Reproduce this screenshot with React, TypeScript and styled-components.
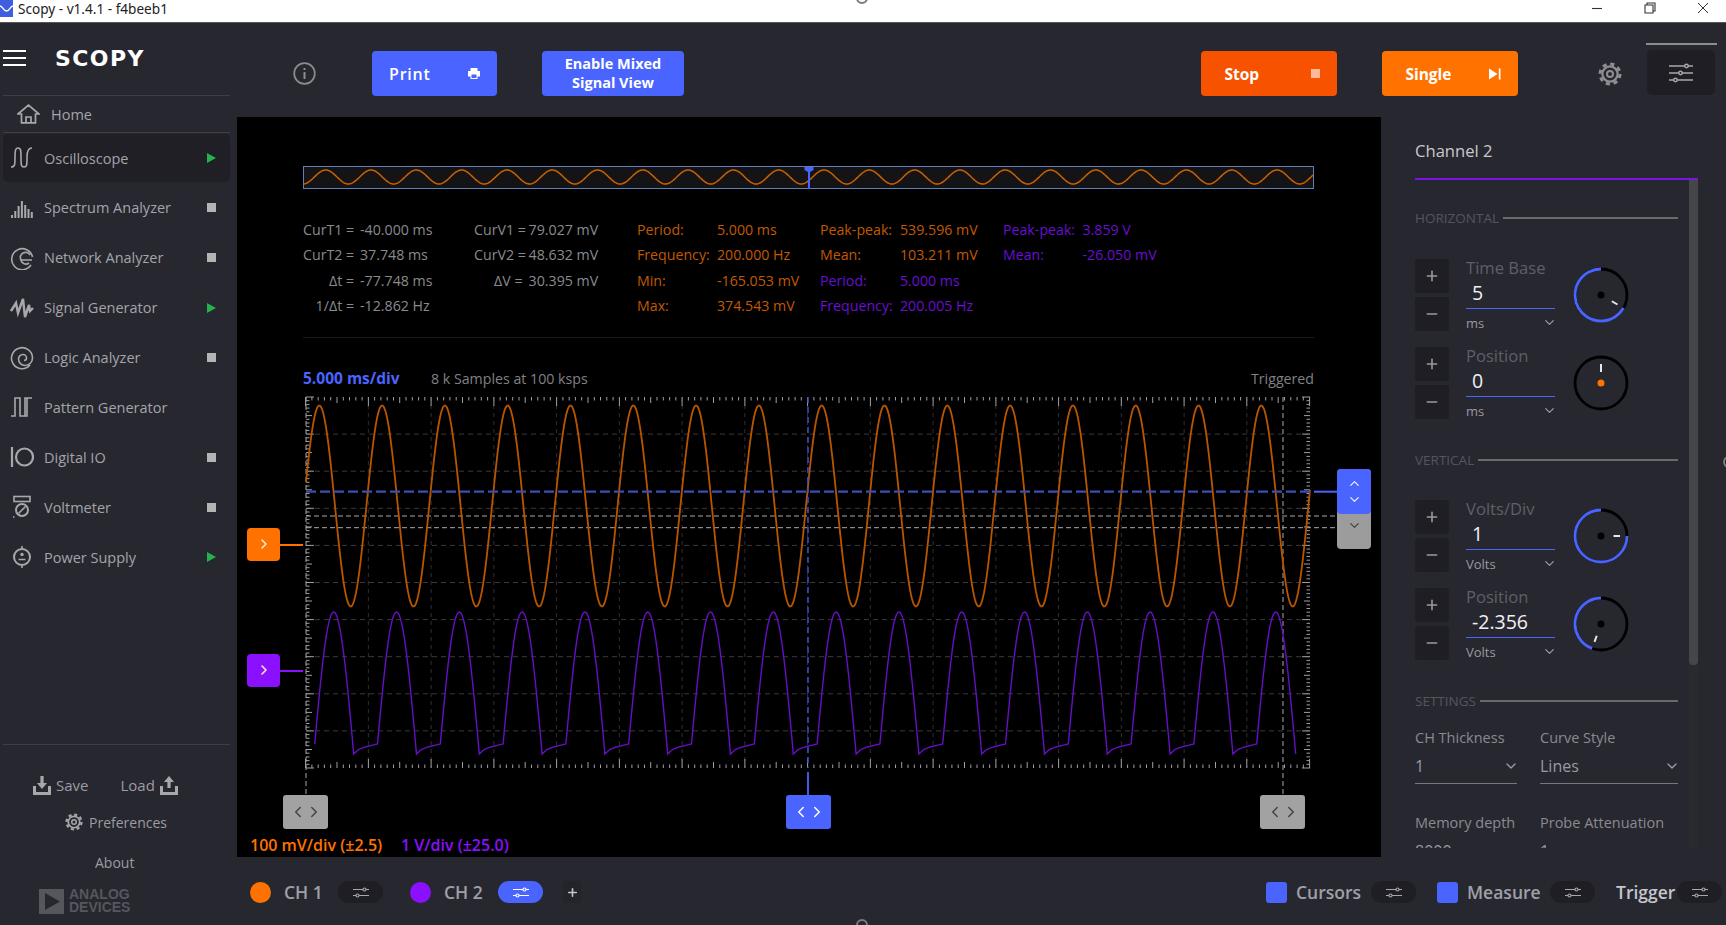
import React from "react";
import styled, { createGlobalStyle } from "styled-components";
import { ChevronDown, ChevronLeft, ChevronRight, ChevronUp, Minus, Plus } from "lucide-react";

const BLUE = "#4a64ff";
const ORANGE = "#ff7200";
const PURPLE = "#8a10ff";
const PANEL = "#272730";
const DARK = "#1e1e24";

const GlobalStyle = createGlobalStyle`
  html, body { margin: 0; padding: 0; background: ${PANEL}; }
  * { box-sizing: border-box; }
  body { font-family: "Open Sans", "Noto Sans", sans-serif; }
`;

const Root = styled.div`
  position: relative;
  width: 1726px;
  height: 925px;
  overflow: hidden;
  display: flex;
  flex-direction: column;
  background: ${PANEL};
`;

const ScreenMark = styled.div<{ $x: number; $y: number }>`
  position: absolute;
  left: ${(p) => p.$x}px;
  top: ${(p) => p.$y}px;
  width: 12px;
  height: 12px;
  border: 2px solid #7c7c7c;
  border-radius: 50%;
`;

/* window chrome */
const TitleBar = styled.header`
  height: 23px;
  flex: none;
  display: flex;
  align-items: flex-start;
  background: #fff;
  border-bottom: 1px solid #55555a;
`;
const AppGlyph = styled.svg`
  width: 13px;
  height: 17px;
  flex: none;
  margin-right: 5px;
`;
const TitleText = styled.span`
  font-family: "Noto Sans", sans-serif;
  font-size: 13.6px;
  line-height: 18px;
  color: #222;
`;
const WindowButtons = styled.div`
  margin-left: auto;
  display: flex;
  gap: 41px;
  padding: 2px 17px 0 0;
`;

/* left rail */
const Columns = styled.div`
  flex: 1;
  min-height: 0;
  display: flex;
`;
const Sidebar = styled.aside`
  width: 237px;
  flex: none;
  display: flex;
  flex-direction: column;
  background: ${PANEL};
`;
const Brand = styled.div`
  height: 73px;
  flex: none;
  margin: 0 7px 0 3px;
  display: flex;
  align-items: center;
  border-bottom: 1px solid #3e3e46;
  padding-bottom: 1px;
`;
const Hamburger = styled.div`
  width: 23px;
  height: 16px;
  border-top: 2px solid #fff;
  border-bottom: 2px solid #fff;
  position: relative;
  margin-top: -1px;
  &::after {
    content: "";
    position: absolute;
    left: 0;
    right: 0;
    top: 5px;
    height: 2px;
    background: #fff;
  }
`;
const Logo = styled.span`
  margin-left: 29px;
  font-family: "DejaVu Sans", sans-serif;
  font-size: 22px;
  font-weight: 700;
  letter-spacing: 1.4px;
  line-height: 24px;
  color: #fff;
`;
const HomeRow = styled.div`
  height: 37px;
  flex: none;
  margin: 0 7px 0 3px;
  padding-left: 14px;
  display: flex;
  align-items: center;
  gap: 11px;
  border-bottom: 1px solid #3e3e46;
  font-size: 14.5px;
  color: #a4a4a9;
`;
const NavList = styled.nav`
  display: flex;
  flex-direction: column;
  gap: 1.9px;
  padding: 1px 7px 0 3px;
`;
const NavItem = styled.div<{ $active?: boolean }>`
  height: 48px;
  display: flex;
  align-items: center;
  padding-left: 7px;
  border-radius: 5px;
  background: ${(p) => (p.$active ? "#1f1f25" : "transparent")};
  font-size: 14.5px;
  color: #a4a4a9;
`;
const NavIcon = styled.span`
  width: 24px;
  height: 24px;
  margin-right: 10px;
  flex: none;
  display: flex;
  align-items: center;
  justify-content: center;
`;
const StopMark = styled.span`
  margin-left: auto;
  margin-right: 14px;
  width: 9px;
  height: 9px;
  background: #b4b4b4;
`;
const RunMark = styled.span`
  margin-left: auto;
  margin-right: 14px;
  width: 0;
  height: 0;
  border-left: 9px solid #25b14c;
  border-top: 5.5px solid transparent;
  border-bottom: 5.5px solid transparent;
`;
const SideFooter = styled.div`
  margin-top: auto;
  height: 181px;
  flex: none;
  margin-left: 3px;
  margin-right: 7px;
  border-top: 1px solid #3e3e46;
  display: flex;
  flex-direction: column;
  font-size: 14px;
  color: #9c9ca2;
`;
const SaveRow = styled.div`
  display: flex;
  align-items: center;
  height: 20px;
  margin-top: 30px;
  padding-left: 30px;
  font-size: 15px;
`;
const SaveLabel = styled.span<{ $gap: number }>`
  margin: 0 ${(p) => p.$gap}px;
`;
const TraySvg = styled.svg<{ $ml?: number }>`
  flex: none;
  margin-left: ${(p) => p.$ml ?? 0}px;
`;
const PrefRow = styled.div`
  height: 20px;
  margin-top: 17px;
  display: flex;
  align-items: center;
  padding-left: 62px;
  gap: 6px;
`;
const AboutRow = styled.div`
  height: 20px;
  margin-top: 21px;
  padding-left: 92px;
  line-height: 20px;
`;
const AdiLogo = styled.div`
  margin-top: 15px;
  padding-left: 36px;
  display: flex;
  gap: 5px;
  align-items: center;
`;
const AdiText = styled.div`
  font-family: "Liberation Sans", sans-serif;
  font-weight: 700;
  font-size: 14px;
  line-height: 13px;
  color: #56565d;
`;

/* main column */
const Main = styled.main`
  flex: 1;
  min-width: 0;
  display: flex;
  flex-direction: column;
`;
const Toolbar = styled.div`
  height: 94px;
  flex: none;
  display: flex;
  align-items: center;
  padding: 7px 9px 0 56px;
`;
const InfoIcon = styled.svg`
  flex: none;
`;
const ToolButton = styled.button<{ $bg: string; $w: number; $ml: number; $pl: number }>`
  width: ${(p) => p.$w}px;
  height: 45px;
  margin-left: ${(p) => p.$ml}px;
  flex: none;
  border: 0;
  border-radius: 4px;
  background: ${(p) => p.$bg};
  color: #fff;
  font-family: inherit;
  font-weight: 700;
  font-size: 15.5px;
  display: flex;
  align-items: center;
  justify-content: space-between;
  padding: 0 17px 0 ${(p) => p.$pl}px;
`;
const PrintLabel = styled.span`
  font-weight: 600;
  font-size: 16px;
  letter-spacing: 0.8px;
`;
const MixedButton = styled.button`
  width: 142px;
  height: 45px;
  margin-left: 45px;
  flex: none;
  border: 0;
  border-radius: 4px;
  background: ${BLUE};
  color: #fff;
  font-family: inherit;
  font-weight: 700;
  font-size: 14.5px;
  line-height: 19px;
  text-align: center;
  padding: 0 0 1px;
`;
const Spacer = styled.div`
  flex: 1;
`;
const GearSlot = styled.span`
  margin-left: 79.6px;
  display: flex;
`;
const SettingsWrap = styled.div`
  width: 71px;
  margin-left: 24px;
  margin-top: -9px;
  border-top: 2px solid #8d8d8d;
  padding: 5px 2px 0 1px;
`;
const SettingsButton = styled.div`
  height: 45px;
  border-radius: 5px;
  background: ${DARK};
  display: flex;
  align-items: center;
  justify-content: center;
`;
const Workspace = styled.div`
  flex: 1;
  min-height: 0;
  display: flex;
`;

/* plot */
const PlotArea = styled.section`
  width: 1144px;
  flex: none;
  background: #000;
  display: flex;
  flex-direction: column;
  padding-top: 49px;
`;
const Overview = styled.svg`
  display: block;
  width: 1011px;
  height: 23px;
  margin-left: 66px;
  flex: none;
`;
const Readouts = styled.div`
  margin: 29px 0 0 66px;
  display: grid;
  grid-template-columns: 57px 114px 54.6px 108.4px 80px 103px 80px 103px 79.5px 1fr;
  grid-auto-rows: 25.4px;
  font-size: 14.2px;
  line-height: 24px;
  white-space: nowrap;
`;
const TONE: Record<string, string> = { grey: "#8a8a8e", orange: "#c25a00", purple: "#6a0fd4" };
const Cell = styled.div<{ $tone: string; $end?: boolean }>`
  color: ${(p) => TONE[p.$tone]};
  ${(p) => (p.$end ? "text-align: right; padding-right: 6px;" : "")}
`;
const Rule = styled.div`
  width: 1011px;
  height: 1px;
  flex: none;
  margin: 17px 0 0 66px;
  background: #1b1b1b;
`;
const PlotHead = styled.div`
  width: 1011px;
  height: 19px;
  flex: none;
  margin: 32px 0 0 66px;
  display: flex;
  font-size: 14.2px;
  line-height: 17px;
  color: #808085;
`;
const Timebase = styled.span`
  width: 128px;
  font-size: 15.5px;
  font-weight: 700;
  color: ${BLUE};
`;
const Triggered = styled.span`
  margin-left: auto;
`;
const PlotFrame = styled.div`
  position: relative;
  height: 445px;
  flex: none;
`;
const PlotSvg = styled.svg`
  display: block;
  width: 1144px;
  height: 445px;
`;
const CursorHandle = styled.div<{ $left: number; $active?: boolean }>`
  position: absolute;
  left: ${(p) => p.$left}px;
  top: 406px;
  width: 45px;
  height: 34px;
  border-radius: 3px;
  background: ${(p) => (p.$active ? BLUE : "#a2a2a2")};
  color: ${(p) => (p.$active ? "#fff" : "#444")};
  display: flex;
  align-items: center;
  justify-content: center;
  svg + svg {
    margin-left: -2px;
  }
`;
const ChannelTag = styled.div<{ $top: number; $color: string }>`
  position: absolute;
  left: 10px;
  top: ${(p) => p.$top}px;
  width: 33px;
  height: 33px;
  border-radius: 4px;
  background: ${(p) => p.$color};
  color: #ffe9d8;
  display: flex;
  align-items: center;
  justify-content: center;
  &::after {
    content: "";
    position: absolute;
    left: 33px;
    top: 16px;
    width: 23px;
    height: 2px;
    background: ${(p) => p.$color};
  }
`;
const LevelHandle = styled.div`
  position: absolute;
  left: 1100px;
  top: 80px;
  width: 34px;
  height: 80px;
  border-radius: 4px;
  background: #9c9c9c;
  color: #444;
  display: flex;
  flex-direction: column;
  align-items: center;
  > svg {
    margin-top: 4px;
  }
`;
const LevelTop = styled.div`
  width: 34px;
  height: 45px;
  flex: none;
  border-radius: 4px;
  background: ${BLUE};
  color: #eef;
  display: flex;
  flex-direction: column;
  align-items: center;
  justify-content: center;
  gap: 1px;
`;
const ScaleRow = styled.div`
  display: flex;
  padding-left: 13px;
  font-size: 16px;
  font-weight: 600;
  line-height: 22px;
`;
const Scale = styled.span<{ $color: string; $w?: number }>`
  color: ${(p) => p.$color};
  width: ${(p) => (p.$w ? `${p.$w}px` : "auto")};
`;

/* channel panel */
const Panel = styled.aside`
  width: 345px;
  flex: none;
  padding-left: 34px;
  overflow: hidden;
`;
const PanelTitle = styled.div`
  width: 283px;
  height: 63px;
  padding-top: 22px;
  border-bottom: 2px solid #7a14e0;
  font-size: 16.6px;
  line-height: 24px;
  color: #c9c9cd;
`;
const PanelBody = styled.div`
  height: 668px;
  width: 283px;
  display: flex;
  overflow: hidden;
`;
const PanelScroll = styled.div`
  width: 274px;
  flex: none;
`;
const ScrollTrack = styled.div`
  width: 9px;
  flex: none;
  background: #2a2a2e;
`;
const ScrollThumb = styled.div`
  height: 485px;
  border-radius: 0 0 4px 4px;
  background: #46464a;
`;
const SectionHead = styled.div<{ $mt: number }>`
  width: 263px;
  height: 18px;
  margin-top: ${(p) => p.$mt}px;
  display: flex;
  align-items: center;
  gap: 4px;
  font-size: 13.5px;
  color: #55555d;
  &::after {
    content: "";
    flex: 1;
    height: 1.5px;
    background: #6a6a6e;
  }
`;
const SpinRow = styled.div<{ $mt: number }>`
  height: 72px;
  margin-top: ${(p) => p.$mt}px;
  display: flex;
  align-items: center;
`;
const StepColumn = styled.div`
  width: 34px;
  flex: none;
  display: flex;
  flex-direction: column;
  gap: 4px;
`;
const StepButton = styled.div`
  height: 34px;
  border-radius: 3px;
  background: ${DARK};
  color: #9a9a9a;
  display: flex;
  align-items: center;
  justify-content: center;
`;
const SpinField = styled.div`
  width: 89px;
  margin-left: 17px;
  flex: none;
`;
const SpinLabel = styled.div`
  height: 18px;
  font-size: 16.6px;
  line-height: 18px;
  color: #5f5f67;
  white-space: nowrap;
`;
const SpinValue = styled.div`
  height: 32px;
  padding: 1px 0 0 6px;
  border-bottom: 1.5px solid ${BLUE};
  font-size: 19.5px;
  line-height: 30px;
  color: #f0f0f4;
`;
const SpinUnit = styled.div`
  height: 22px;
  padding-top: 5px;
  display: flex;
  align-items: center;
  justify-content: space-between;
  font-size: 13px;
  color: #9a9aa0;
  svg {
    margin-right: -2px;
  }
`;
const KnobSvg = styled.svg`
  width: 56px;
  height: 56px;
  margin-left: 18px;
  flex: none;
`;
const OptionGrid = styled.div`
  display: grid;
  grid-template-columns: 102px 138px;
  column-gap: 23px;
  margin-top: 19px;
`;
const OptionLabel = styled.div`
  height: 18px;
  font-size: 14.5px;
  line-height: 18px;
  color: #8a8a90;
  white-space: nowrap;
`;
const OptionValue = styled.div<{ $ruled?: boolean }>`
  height: 37px;
  margin-bottom: 30px;
  padding-top: 1px;
  display: flex;
  align-items: center;
  justify-content: space-between;
  font-size: 16px;
  color: #9a9aa0;
  border-bottom: ${(p) => (p.$ruled ? "1.5px solid #77777c" : "0")};
  svg {
    margin-right: -2px;
  }
`;

/* bottom strip */
const BottomBar = styled.footer`
  height: 68px;
  flex: none;
  display: flex;
  align-items: center;
  padding: 2px 4px 0 13px;
`;
const Dot = styled.span<{ $color: string }>`
  width: 21px;
  height: 21px;
  flex: none;
  border-radius: 50%;
  background: ${(p) => p.$color};
`;
const ChannelName = styled.span<{ $w: number }>`
  width: ${(p) => p.$w}px;
  margin-left: 13px;
  flex: none;
  font-size: 17.5px;
  font-weight: 600;
  color: #9fa0a8;
`;
const MenuPill = styled.div<{ $on?: boolean }>`
  width: 45px;
  height: 22px;
  flex: none;
  border-radius: 11px;
  background: ${(p) => (p.$on ? BLUE : DARK)};
  display: flex;
  align-items: center;
  justify-content: center;
`;
const AddButton = styled.div`
  width: 18px;
  height: 22px;
  flex: none;
  margin-left: 20px;
  border-radius: 2px;
  background: #23232a;
  color: #c4c4c8;
  display: flex;
  align-items: center;
  justify-content: center;
`;
const ToggleSquare = styled.span`
  width: 21px;
  height: 21px;
  flex: none;
  border-radius: 3px;
  background: ${BLUE};
`;
const ToolName = styled.span<{ $w: number; $bright?: boolean }>`
  width: ${(p) => p.$w}px;
  margin-left: 9px;
  flex: none;
  font-size: 17.5px;
  font-weight: 600;
  color: ${(p) => (p.$bright ? "#c6c6cc" : "#9fa0a8")};
`;
const GapBox = styled.span<{ $w: number }>`
  width: ${(p) => p.$w}px;
  flex: none;
`;

/* drawings */
const Gear = ({ size, color }: { size: number; color: string }) => (
  <svg width={size} height={size} viewBox="0 0 24 24" fill="none" stroke={color}>
    <circle cx="12" cy="12" r="10" strokeWidth="3" strokeDasharray="4.1 3.75" />
    <circle cx="12" cy="12" r="7.6" strokeWidth="2.2" />
    <circle cx="12" cy="12" r="3" strokeWidth="2" />
  </svg>
);

const Sliders = ({ color = "#a8a8a8" }: { color?: string }) => (
  <svg width="16" height="13" viewBox="0 0 16 13" fill="none" stroke={color} strokeWidth="1.2">
    <path d="M0 3.5H10M13 3.5H16M0 9.5H3M6 9.5H16" />
    <circle cx="11.5" cy="3.5" r="1.5" />
    <circle cx="4.5" cy="9.5" r="1.5" />
  </svg>
);

const Tray = ({ up, ml }: { up?: boolean; ml?: number }) => (
  <TraySvg $ml={ml} width="18" height="19" viewBox="0 0 18 19" fill="#a8a8ac">
    <path d="M0 10h3v6h12v-6h3v9H0z" />
    {up ? <path d="M9 0l5 6h-3.4v6H7.4V6H4z" /> : <path d="M7.4 0h3.2v7H14l-5 6-5-6h3.4z" />}
  </TraySvg>
);

const icons: Record<string, React.ReactNode> = {
  scope: (
    <path d="M1 21C5 21 5 19 5 11C5 3 6 2 8 2C11 2 11 5 11 11C11 19 11 21 14 21C17 21 17 19 17 11C17 5 18 2 22 2" />
  ),
  spectrum: (
    <path
      strokeWidth="2"
      d="M2 22V19M5.3 22V15M8.6 22V10M11.9 22V5M15.2 22V9M18.5 22V13M21.8 22V16"
    />
  ),
  network: (
    <>
      <path d="M21 19A10.5 10.5 0 1 1 22.5 11" />
      <path d="M22 14H11A5 5 0 0 1 20 9" />
      <path d="M11 14A5 5 0 0 0 19 17" />
    </>
  ),
  generator: <path strokeWidth="2.4" d="M1 15L6 7L8 17L13 3L15 21L19 9L20 15L23 12" />,
  logic: (
    <>
      <path d="M20 19A10.5 10.5 0 1 1 22.5 12A7.5 7.5 0 0 1 15 19.5A6.5 6.5 0 0 1 8.5 13A4.5 4.5 0 0 1 13 8.5A3.5 3.5 0 0 1 16.5 12A2.5 2.5 0 0 1 14 14.5" />
    </>
  ),
  pattern: <path d="M1 21H5V3H10V21H15V3H22M17 3V21H14" />,
  io: (
    <>
      <path strokeWidth="2.2" d="M2 2V22" />
      <circle cx="14.5" cy="12" r="8.5" strokeWidth="2.2" />
    </>
  ),
  volt: (
    <>
      <rect x="4" y="1.5" width="16" height="5" />
      <circle cx="12" cy="15" r="6" strokeWidth="2" />
      <path d="M8.5 18.5L15.5 11.5" />
      <path strokeWidth="1.6" strokeDasharray="1.5 20" d="M3 22H21" />
    </>
  ),
  power: (
    <>
      <circle cx="12" cy="12" r="8" strokeWidth="2" />
      <circle cx="12" cy="9.5" r="1.7" fill="#a8a8ac" strokeWidth="0" />
      <path strokeWidth="1.6" d="M8.5 14.5H15.5M12 1V4M12 20V23" />
    </>
  ),
};

const NavGlyph = ({ name }: { name: string }) => (
  <NavIcon>
    <svg width="24" height="24" viewBox="0 0 24 24" fill="none" stroke="#a8a8ac" strokeWidth="1.6">
      {icons[name]}
    </svg>
  </NavIcon>
);

const tools = [
  { name: "Oscilloscope", icon: "scope", state: "run", active: true },
  { name: "Spectrum Analyzer", icon: "spectrum", state: "stop" },
  { name: "Network Analyzer", icon: "network", state: "stop" },
  { name: "Signal Generator", icon: "generator", state: "run" },
  { name: "Logic Analyzer", icon: "logic", state: "stop" },
  { name: "Pattern Generator", icon: "pattern", state: "" },
  { name: "Digital IO", icon: "io", state: "stop" },
  { name: "Voltmeter", icon: "volt", state: "stop" },
  { name: "Power Supply", icon: "power", state: "run" },
];

type Read = [string, string, boolean?];
const readoutRows: Read[][] = [
  [
    ["CurT1 =", "grey", true], ["-40.000 ms", "grey"], ["CurV1 =", "grey", true], ["79.027 mV", "grey"],
    ["Period:", "orange"], ["5.000 ms", "orange"], ["Peak-peak:", "orange"], ["539.596 mV", "orange"],
    ["Peak-peak:", "purple"], ["3.859 V", "purple"],
  ],
  [
    ["CurT2 =", "grey", true], ["37.748 ms", "grey"], ["CurV2 =", "grey", true], ["48.632 mV", "grey"],
    ["Frequency:", "orange"], ["200.000 Hz", "orange"], ["Mean:", "orange"], ["103.211 mV", "orange"],
    ["Mean:", "purple"], ["-26.050 mV", "purple"],
  ],
  [
    ["Δt =", "grey", true], ["-77.748 ms", "grey"], ["ΔV =", "grey", true], ["30.395 mV", "grey"],
    ["Min:", "orange"], ["-165.053 mV", "orange"], ["Period:", "purple"], ["5.000 ms", "purple"],
    ["", "grey"], ["", "grey"],
  ],
  [
    ["1/Δt =", "grey", true], ["-12.862 Hz", "grey"], ["", "grey"], ["", "grey"],
    ["Max:", "orange"], ["374.543 mV", "orange"], ["Frequency:", "purple"], ["200.005 Hz", "purple"],
    ["", "grey"], ["", "grey"],
  ],
];

const sinePath = (x0: number, x1: number, peak: number, period: number, mid: number, amp: number) => {
  const pts: string[] = [];
  for (let x = x0; x <= x1; x += 1) {
    const y = mid - amp * Math.cos((2 * Math.PI * (x - peak)) / period);
    pts.push(`${x.toFixed(1)} ${y.toFixed(1)}`);
  }
  return `M${pts.join("L")}`;
};

const PERIOD = 62.8;
const orangeWave = sinePath(306, 1310, 319.3, PERIOD, 505, 100.5);

const purpleWave = (() => {
  const pts: string[] = [];
  for (let k = 0; k < 16; k++) {
    const p = 333.7 + k * PERIOD;
    for (let d = -19; d <= 20; d += 1) {
      const y = d < 0 ? 743 - 132 * Math.cos((Math.PI * d) / 38) : 753 - 142 * Math.cos((Math.PI * d) / 40);
      pts.push(`${(p + d).toFixed(1)} ${y.toFixed(1)}`);
    }
    if (k < 15) {
      for (let t = 0.2; t <= 1; t += 0.2) {
        pts.push(`${(p + 20 + 23.8 * t).toFixed(1)} ${(753 - 10 * Math.sqrt(t)).toFixed(1)}`);
      }
    }
  }
  return `M${pts.join("L")}`;
})();

const hTicks = (() => {
  let d = "";
  for (let i = 0; i <= 160; i++) {
    const len = i % 10 === 0 ? 9 : i % 5 === 0 ? 6 : 3.5;
    const x = (305.6 + i * 6.275).toFixed(1);
    d += `M${x} 396V${396 + len}M${x} 767V${767 - len}`;
  }
  return d;
})();
const vTicks = (() => {
  let d = "";
  for (let j = 0; j <= 100; j++) {
    const len = j % 10 === 0 ? 8 : j % 5 === 0 ? 6 : 3.5;
    const y = (396 + j * 3.71).toFixed(1);
    d += `M306 ${y}H${306 + len}M1310 ${y}H${1310 - len}`;
  }
  return d;
})();
const vGrid = Array.from({ length: 15 }, (_, i) => 368.35 + i * 62.75);
const hGrid = Array.from({ length: 9 }, (_, i) => 433.1 + i * 37.1);

const Knob = ({ angle, active = true, dot = "#000" }: { angle: number; active?: boolean; dot?: string }) => {
  const at = (r: number) => {
    const a = (angle * Math.PI) / 180;
    return [28 + r * Math.sin(a), 28 - r * Math.cos(a)];
  };
  const [sx, sy] = at(26);
  const [ix, iy] = at(active ? 12.5 : 11);
  const [ox, oy] = at(19);
  return (
    <KnobSvg viewBox="0 0 56 56" fill="none">
      <circle cx="28" cy="28" r="26" stroke="#000" strokeWidth="2.8" />
      {active && (
        <path
          d={`M${sx} ${sy}A26 26 0 ${360 - angle > 180 ? 1 : 0} 1 28 2`}
          stroke={BLUE}
          strokeWidth="2.8"
        />
      )}
      <path d={`M${ix} ${iy}L${ox} ${oy}`} stroke="#e8e8e8" strokeWidth="2" />
      <circle cx="28" cy="28" r="3.5" fill={dot} />
    </KnobSvg>
  );
};

const Spin = ({ label, value, unit, mt, knob }: { label: string; value: string; unit: string; mt: number; knob: React.ReactNode }) => (
  <SpinRow $mt={mt}>
    <StepColumn>
      <StepButton>
        <Plus size={16} strokeWidth={2.4} />
      </StepButton>
      <StepButton>
        <Minus size={16} strokeWidth={2.4} />
      </StepButton>
    </StepColumn>
    <SpinField>
      <SpinLabel>{label}</SpinLabel>
      <SpinValue>{value}</SpinValue>
      <SpinUnit>
        {unit}
        <ChevronDown size={15} strokeWidth={2} color="#9a9aa0" />
      </SpinUnit>
    </SpinField>
    {knob}
  </SpinRow>
);

const Arrows = () => (
  <>
    <ChevronLeft size={18} strokeWidth={2} />
    <ChevronRight size={18} strokeWidth={2} />
  </>
);

export default function App() {
  return (
    <Root>
      <GlobalStyle />
      <TitleBar>
        <AppGlyph viewBox="0 0 13 17">
          <rect width="13" height="17" y="0" fill="#3f5fe0" />
          <path d="M0 6C3 6 3 11 6.500 11C10 11 10 6 13 6" fill="none" stroke="#fff" strokeWidth="1.4" />
        </AppGlyph>
        <TitleText>Scopy - v1.4.1 - f4beeb1</TitleText>
        <WindowButtons>
          <svg width="12" height="12" viewBox="0 0 12 12" fill="none" stroke="#333" strokeWidth="1.1">
            <path d="M1 6.500H11" />
          </svg>
          <svg width="12" height="12" viewBox="0 0 12 12" fill="none" stroke="#333" strokeWidth="1.1">
            <path d="M1 3H9V11H1ZM3 3V1H11V9H9" />
          </svg>
          <svg width="12" height="12" viewBox="0 0 12 12" fill="none" stroke="#333" strokeWidth="1">
            <path d="M1 1L11 11M11 1L1 11" />
          </svg>
        </WindowButtons>
      </TitleBar>

      <Columns>
        <Sidebar>
          <Brand>
            <Hamburger />
            <Logo>SCOPY</Logo>
          </Brand>
          <HomeRow>
            <svg width="23" height="20" viewBox="0 0 23 20" fill="none" stroke="#a8a8ac" strokeWidth="1.7">
              <path d="M1 10L11.500 1.200L22 10H18.500V18.800H4.500V10ZM9 18.800V13H14V18.800" />
            </svg>
            Home
          </HomeRow>
          <NavList>
            {tools.map((t) => (
              <NavItem key={t.name} $active={t.active}>
                <NavGlyph name={t.icon} />
                {t.name}
                {t.state === "run" && <RunMark />}
                {t.state === "stop" && <StopMark />}
              </NavItem>
            ))}
          </NavList>
          <SideFooter>
            <SaveRow>
              <Tray />
              <SaveLabel $gap={5}>Save</SaveLabel>
              <SaveLabel $gap={27}>Load</SaveLabel>
              <Tray up ml={-22} />
            </SaveRow>
            <PrefRow>
              <Gear size={18} color="#a8a8ac" />
              Preferences
            </PrefRow>
            <AboutRow>About</AboutRow>
            <AdiLogo>
              <svg width="25" height="25" viewBox="0 0 25 25">
                <path fillRule="evenodd" fill="#56565d" d="M0 0H25V25H0ZM6 4V21L21 12.500Z" />
              </svg>
              <AdiText>
                ANALOG
                <br />
                DEVICES
              </AdiText>
            </AdiLogo>
          </SideFooter>
        </Sidebar>

        <Main>
          <Toolbar>
            <InfoIcon width="23" height="23" viewBox="0 0 23 23" fill="none" stroke="#8c8c90" strokeWidth="1.7">
              <circle cx="11.500" cy="11.500" r="10.300" />
              <path strokeWidth="2" d="M11.500 10V17M11.500 6V8" />
            </InfoIcon>
            <ToolButton $bg={BLUE} $w={125} $ml={56} $pl={17}>
              <PrintLabel>Print</PrintLabel>
              <svg width="12" height="11" viewBox="0 0 12 11" fill="#fff">
                <path fillRule="evenodd" d="M2.500 0H9.500V3H12V8.500H9.500V11H2.500V8.500H0V3H2.500ZM3.500 6.500V10H8.500V6.500Z" />
              </svg>
            </ToolButton>
            <MixedButton>
              Enable Mixed
              <br />
              Signal View
            </MixedButton>
            <Spacer />
            <ToolButton $bg="#f75200" $w={136} $ml={0} $pl={23}>
              Stop
              <svg width="9" height="9" viewBox="0 0 9 9">
                <rect width="9" height="9" fill="#ffb99a" />
              </svg>
            </ToolButton>
            <ToolButton $bg={ORANGE} $w={136} $ml={45} $pl={23}>
              Single
              <svg width="12" height="12" viewBox="0 0 12 12" fill="#fff">
                <path d="M0 0.500L8.500 6L0 11.500ZM9.800 0.500H11.500V11.500H9.800Z" />
              </svg>
            </ToolButton>
            <GearSlot>
              <Gear size={24} color="#8f8f93" />
            </GearSlot>
            <SettingsWrap>
              <SettingsButton>
                <svg width="24" height="20" viewBox="0 0 24 20" fill="none" stroke="#a8a8ac" strokeWidth="1.500">
                  <path d="M0 3H16M19 3H24M0 10H10M13 10H24M0 17H5M8 17H24" />
                  <circle cx="17.500" cy="3" r="1.700" />
                  <circle cx="11.500" cy="10" r="1.700" />
                  <circle cx="6.500" cy="17" r="1.700" />
                </svg>
              </SettingsButton>
            </SettingsWrap>
          </Toolbar>

          <Workspace>
            <PlotArea>
              <Overview viewBox="0 0 1011 23">
                <rect x="0.500" y="0.500" width="1010" height="22" fill="#141416" stroke="#5f7fb5" />
                <path d={sinePath(1, 1010, 22.7, 45.3, 11, 7)} fill="none" stroke="#cb6000" strokeWidth="1.500" />
                <path d="M506 1V23" stroke={BLUE} strokeWidth="2" />
                <path d="M501.500 1H510.500V4L507 6H505L501.500 4Z" fill={BLUE} />
              </Overview>
              <Readouts>
                {readoutRows.flat().map((c, i) => (
                  <Cell key={i} $tone={c[1]} $end={c[2]}>
                    {c[0]}
                  </Cell>
                ))}
              </Readouts>
              <Rule />
              <PlotHead>
                <Timebase>5.000 ms/div</Timebase>
                <span>8 k Samples at 100 ksps</span>
                <Triggered>Triggered</Triggered>
              </PlotHead>
              <PlotFrame>
                <PlotSvg viewBox="237 388 1144 445" fill="none">
                  {vGrid.map((x) => (
                    <path key={x} d={`M${x} 396V767`} stroke="#2f2f2f" strokeDasharray="4 4" />
                  ))}
                  {hGrid.map((y) => (
                    <path key={y} d={`M306 ${y}H1310`} stroke="#3a3a3a" strokeDasharray="5 4" />
                  ))}
                  <path d={hTicks + vTicks} stroke="#a0a0a0" />
                  <path d="M306 396V794M1283 396V794" stroke="#a8a8a8" strokeDasharray="5 3" />
                  <path d="M306 515H1337M306 526.700H1337" stroke="#a8a8a8" strokeDasharray="5 3" />
                  <path d={purpleWave} stroke="#6410c4" strokeWidth="1.400" />
                  <path d={orangeWave} stroke="#b85600" strokeWidth="1.800" />
                  <path d="M306 490.700H1310" stroke="#3a4eb4" strokeWidth="2.200" strokeDasharray="10 4" />
                  <path d="M1314 490.700H1337" stroke={BLUE} strokeWidth="2" />
                  <path d="M808 396V767" stroke="#3c50c8" strokeWidth="1.500" strokeDasharray="6 4" />
                  <path d="M808 771V794" stroke={BLUE} strokeWidth="1.800" />
                </PlotSvg>
                <ChannelTag $top={139} $color={ORANGE}>
                  <ChevronRight size={16} strokeWidth={2.4} />
                </ChannelTag>
                <ChannelTag $top={265} $color={PURPLE}>
                  <ChevronRight size={16} strokeWidth={2.4} />
                </ChannelTag>
                <LevelHandle>
                  <LevelTop>
                    <ChevronUp size={15} strokeWidth={2} />
                    <ChevronDown size={15} strokeWidth={2} />
                  </LevelTop>
                  <ChevronDown size={15} strokeWidth={2} />
                </LevelHandle>
                <CursorHandle $left={46}>
                  <Arrows />
                </CursorHandle>
                <CursorHandle $left={549} $active>
                  <Arrows />
                </CursorHandle>
                <CursorHandle $left={1023}>
                  <Arrows />
                </CursorHandle>
              </PlotFrame>
              <ScaleRow>
                <Scale $color={ORANGE} $w={151}>
                  100 mV/div (±2.5)
                </Scale>
                <Scale $color={PURPLE}>1 V/div (±25.0)</Scale>
              </ScaleRow>
            </PlotArea>

            <Panel>
              <PanelTitle>Channel 2</PanelTitle>
              <PanelBody>
                <PanelScroll>
                  <SectionHead $mt={29}>HORIZONTAL</SectionHead>
                  <Spin mt={32} label="Time Base" value="5" unit="ms" knob={<Knob angle={120} />} />
                  <Spin mt={16} label="Position" value="0" unit="ms" knob={<Knob angle={0} active={false} dot={ORANGE} />} />
                  <SectionHead $mt={32}>VERTICAL</SectionHead>
                  <Spin mt={31} label="Volts/Div" value="1" unit="Volts" knob={<Knob angle={90} />} />
                  <Spin mt={16} label="Position" value="-2.356" unit="Volts" knob={<Knob angle={200} />} />
                  <SectionHead $mt={32}>SETTINGS</SectionHead>
                  <OptionGrid>
                    <OptionLabel>CH Thickness</OptionLabel>
                    <OptionLabel>Curve Style</OptionLabel>
                    <OptionValue $ruled>
                      1
                      <ChevronDown size={16} strokeWidth={2} />
                    </OptionValue>
                    <OptionValue $ruled>
                      Lines
                      <ChevronDown size={16} strokeWidth={2} />
                    </OptionValue>
                    <OptionLabel>Memory depth</OptionLabel>
                    <OptionLabel>Probe Attenuation</OptionLabel>
                    <OptionValue>8000</OptionValue>
                    <OptionValue>1</OptionValue>
                  </OptionGrid>
                </PanelScroll>
                <ScrollTrack>
                  <ScrollThumb />
                </ScrollTrack>
              </PanelBody>
            </Panel>
          </Workspace>

          <BottomBar>
            <Dot $color={ORANGE} />
            <ChannelName $w={54}>CH 1</ChannelName>
            <MenuPill>
              <Sliders />
            </MenuPill>
            <GapBox $w={27} />
            <Dot $color={PURPLE} />
            <ChannelName $w={54}>CH 2</ChannelName>
            <MenuPill $on>
              <Sliders color="#fff" />
            </MenuPill>
            <AddButton>
              <Plus size={13} strokeWidth={3} />
            </AddButton>
            <Spacer />
            <ToggleSquare />
            <ToolName $w={75}>Cursors</ToolName>
            <MenuPill>
              <Sliders />
            </MenuPill>
            <GapBox $w={21} />
            <ToggleSquare />
            <ToolName $w={83}>Measure</ToolName>
            <MenuPill>
              <Sliders />
            </MenuPill>
            <GapBox $w={12} />
            <ToolName $w={61} $bright>
              Trigger
            </ToolName>
            <MenuPill>
              <Sliders />
            </MenuPill>
          </BottomBar>
        </Main>
      </Columns>
      <ScreenMark $x={856} $y={-8} />
      <ScreenMark $x={856} $y={919} />
      <ScreenMark $x={1723} $y={456} />
    </Root>
  );
}
